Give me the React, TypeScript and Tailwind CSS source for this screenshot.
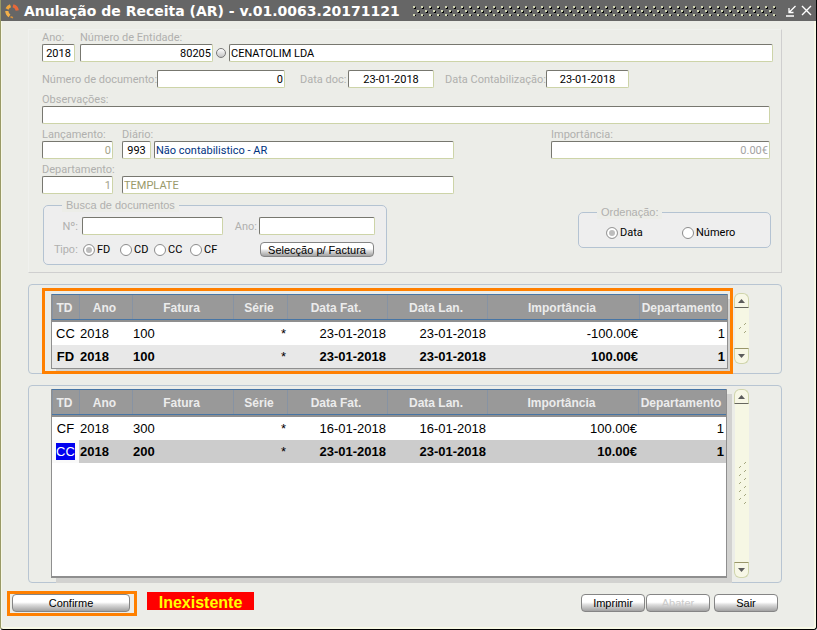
import type { ReactNode } from "react";

const inputBase =
  "h-[18px] min-w-0 rounded-[2px] border border-[#cdd4a8] border-t-[#77776f] border-l-[#77776f] bg-white px-px pt-px font-[Roboto,Arial,sans-serif] text-[11px] leading-[14px] outline-none";

type FieldProps = {
  id: string;
  label?: string;
  value?: string;
  className?: string;
};

function Field({ id, label, value = "", className = "text-black" }: FieldProps) {
  return (
    <input
      id={id}
      aria-label={label}
      defaultValue={value}
      className={`${inputBase} ${className}`}
    />
  );
}

function Caption({ htmlFor, children, className = "" }: { htmlFor: string; children: ReactNode; className?: string }) {
  return (
    <label
      htmlFor={htmlFor}
      className={`block h-[13px] whitespace-nowrap font-[Roboto,Arial,sans-serif] text-[11px] leading-[13px] text-[#b0b0ae] ${className}`}
    >
      {children}
    </label>
  );
}

function Radio({ name, text, checked = false, className = "" }: { name: string; text: string; checked?: boolean; className?: string }) {
  return (
    <label className={`flex items-center gap-[2px] font-[Roboto,Arial,sans-serif] text-[11px] leading-[13px] text-black ${className}`}>
      <input
        type="radio"
        name={name}
        defaultChecked={checked}
        className="size-3 shrink-0 appearance-none rounded-full border border-[#8c8c8c] bg-white checked:border-[#9a9a9a] checked:bg-[#bdbdbd] checked:shadow-[inset_0_0_0_2px_#fff]"
      />
      {text}
    </label>
  );
}

function PushButton({ children, className = "", disabled = false }: { children: ReactNode; className?: string; disabled?: boolean }) {
  return (
    <button
      type="button"
      disabled={disabled}
      className={`rounded-[4px] border border-[#858585] bg-linear-to-b from-white from-45% via-[#dedede] via-60% to-[#a2a2a2] text-center text-[11px] leading-[15px] whitespace-nowrap text-black disabled:text-[#cacaca] ${className}`}
    >
      {children}
    </button>
  );
}

function ScrollBar({ marks, className = "" }: { marks: number; className?: string }) {
  return (
    <div className={`flex w-[15px] shrink-0 flex-col ${className}`}>
      <button
        type="button"
        aria-label="Subir"
        className="flex h-[15px] shrink-0 items-center justify-center rounded-t-[6px] border border-[#d0d5ac] border-b-[#66665e] bg-[#f7f7e6]"
      >
        <svg width="7" height="4" viewBox="0 0 7 4"><path d="M0 4L3.5 0L7 4Z" fill="#5c5c5c" /></svg>
      </button>
      <div className="ml-px flex flex-1 items-center justify-center bg-[#f6f7e4]">
        <svg width="9" height={marks * 4} viewBox={`0 0 9 ${marks * 4}`}>
          {Array.from({ length: marks }, (_, i) => (
            <path
              key={i}
              d={i % 2 === 0 ? `M6 ${i * 4 + 3}L8 ${i * 4 + 1}` : `M1 ${i * 4 + 3}L3 ${i * 4 + 1}`}
              stroke="#a5a780"
              strokeWidth="1"
            />
          ))}
        </svg>
      </div>
      <button
        type="button"
        aria-label="Descer"
        className="flex h-[16px] shrink-0 items-center justify-center rounded-b-[6px] border border-[#d0d5ac] border-t-[#99966a] bg-[#f7f7e6]"
      >
        <svg width="7" height="4" viewBox="0 0 7 4"><path d="M0 0L3.5 4L7 0Z" fill="#5c5c5c" /></svg>
      </button>
    </div>
  );
}

type Row = { td: string; ano: string; fatura: string; fat: string; lan: string; valor: string; dep: string; selected?: boolean; bold?: boolean };

const heads = ["TD", "Ano", "Fatura", "Série", "Data Fat.", "Data Lan.", "Importância", "Departamento"];

function Grid({ rows, shade }: { rows: Row[]; shade: string }) {
  return (
    <table className="w-full table-fixed border-separate border-spacing-0">
      <colgroup>
        <col className="w-[27px]" />
        <col className="w-[53px]" />
        <col className="w-[101px]" />
        <col className="w-[54px]" />
        <col className="w-[100px]" />
        <col className="w-[100px]" />
        <col />
        <col className="w-[88px]" />
      </colgroup>
      <thead>
        <tr>
          {heads.map((h) => (
            <th
              key={h}
              className="border-b-2 border-b-[#8f8f8f] p-0 text-center text-[12px] leading-[26px] font-bold whitespace-nowrap text-[#ececec]"
            >
              <div className="h-[26px] border-y border-[#4775a5] bg-[#999999] pr-[2px] shadow-[inset_1px_0_0_#8793a3]">{h}</div>
            </th>
          ))}
        </tr>
      </thead>
      <tbody className="text-[13px] leading-[23px] whitespace-nowrap text-black">
        {rows.map((r) => (
          <tr key={r.td + r.fatura} className={`h-[23px] ${r.bold ? `font-bold ${shade}` : "bg-white"}`}>
            <td className={`p-0 text-center ${r.selected ? "bg-[#f9f9f9] font-normal" : ""}`}>
              <span className={r.selected ? "inline-block h-[17px] bg-[#0000f0] leading-[17px] text-white" : ""}>{r.td}</span>
            </td>
            <td className="p-0 pl-px">{r.ano}</td>
            <td className="p-0 pl-px">{r.fatura}</td>
            <td className="p-0 pr-px text-right font-normal">*</td>
            <td className="p-0 pr-px text-right">{r.fat}</td>
            <td className="p-0 pr-px text-right">{r.lan}</td>
            <td className="p-0 pr-px text-right">{r.valor}</td>
            <td className="p-0 pr-[2px] text-right">{r.dep}</td>
          </tr>
        ))}
      </tbody>
    </table>
  );
}

const topRows: Row[] = [
  { td: "CC", ano: "2018", fatura: "100", fat: "23-01-2018", lan: "23-01-2018", valor: "-100.00€", dep: "1" },
  { td: "FD", ano: "2018", fatura: "100", fat: "23-01-2018", lan: "23-01-2018", valor: "100.00€", dep: "1", bold: true },
];

const bottomRows: Row[] = [
  { td: "CF", ano: "2018", fatura: "300", fat: "16-01-2018", lan: "16-01-2018", valor: "100.00€", dep: "1" },
  { td: "CC", ano: "2018", fatura: "200", fat: "23-01-2018", lan: "23-01-2018", valor: "10.00€", dep: "1", bold: true, selected: true },
];

function TitleBar() {
  return (
    <header className="flex h-[21px] items-center bg-[#666666] pr-[4px] pl-[3px]">
      <svg width="16" height="16" viewBox="0 0 16 16" fill="none" strokeWidth="3.200" className="mr-[4px] shrink-0">
        <path d="M6.500 2.800A6 6 0 0 0 3 6" stroke="#f0a63c" />
        <path d="M2.800 8A6 6 0 0 0 5.500 12.800" stroke="#f3b04a" />
        <path d="M9 2.800A6 6 0 0 1 13.300 7.500" stroke="#e8683a" />
        <path d="M6.500 13.800L9 14.800" stroke="#d9943c" strokeWidth="1.500" />
      </svg>
      <h1 className="text-[14px] leading-[20px] font-bold whitespace-nowrap text-white [font-family:Verdana,'DejaVu_Sans',sans-serif]">
        Anulação de Receita (AR) - v.01.0063.20171121
      </h1>
      <svg className="mr-[9px] ml-[13px] h-[10px] min-w-0 flex-1" aria-hidden="true">
        <defs>
          <pattern id="grip" width="8" height="8" patternUnits="userSpaceOnUse">
            <path d="M1 1h2v2h-2zM5 5h2v2h-2z" fill="#000" />
            <path d="M0 0h2v2h-2zM4 4h2v2h-2z" fill="#d3d8b4" />
          </pattern>
        </defs>
        <rect width="100%" height="11" fill="url(#grip)" />
      </svg>
      <button type="button" aria-label="Minimizar" className="mr-[4px]">
        <svg width="12" height="12" viewBox="0 0 12 12" fill="none" stroke="#fff" strokeWidth="1.300">
          <path d="M10.500 1L4.500 7M4 3v4.500h4.500M1 11h8" />
        </svg>
      </button>
      <button type="button" aria-label="Fechar">
        <svg width="11" height="11" viewBox="0 0 11 11" fill="none" stroke="#fff" strokeWidth="1.400">
          <path d="M1 1l9 9M10 1l-9 9" />
        </svg>
      </button>
    </header>
  );
}

export default function App() {
  return (
    <div className="flex min-h-screen flex-col rounded-b-[3px] border-r border-b border-l border-black border-l-[#999966] bg-[#ecede8] font-['Liberation_Sans',Arial,sans-serif] shadow-[inset_-2px_-2px_0_#f7f8e6,inset_1px_0_0_#f7f8e6]">
      <TitleBar />
      <main className="flex flex-1 flex-col pt-2 pr-[34px] pl-[27px]">
        <form className="flex flex-col border border-[#f0f1ee] border-r-[#cfcfcf] border-b-[#cfcfcf] pt-px pr-2 pb-[7px] pl-[13px]">
          <div className="flex items-end">
            <div className="mr-[5px] flex w-[33px] flex-col">
              <Caption htmlFor="ano">Ano:</Caption>
              <Field id="ano" value="2018" className="text-center text-black" />
            </div>
            <div className="flex w-[133px] flex-col">
              <Caption htmlFor="entidade">Número de Entidade:</Caption>
              <Field id="entidade" value="80205" className="text-right text-black" />
            </div>
            <button
              type="button"
              aria-label="Procurar entidade"
              className="mx-[3px] mb-[4px] size-[10px] self-end rounded-full border border-[#777] bg-linear-to-b from-white to-[#c4c4c4]"
            />
            <Field id="nome" label="Nome da entidade" value="CENATOLIM LDA" className="flex-1 text-black" />
          </div>

          <div className="mt-2 flex items-center">
            <Caption htmlFor="documento" className="w-[115px]">Número de documento:</Caption>
            <Field id="documento" value="0" className="w-[128px] text-right text-black" />
            <Caption htmlFor="datadoc" className="ml-[15px] w-[48px]">Data doc:</Caption>
            <Field id="datadoc" value="23-01-2018" className="w-[86px] text-center text-black" />
            <Caption htmlFor="datacont" className="ml-[11px] w-[101px]">Data Contabilização:</Caption>
            <Field id="datacont" value="23-01-2018" className="w-[83px] text-center text-black" />
          </div>

          <div className="mt-[5px] mr-[3px] flex flex-col">
            <Caption htmlFor="obs">Observações:</Caption>
            <Field id="obs" />
          </div>

          <div className="mt-1 mr-[3px] flex items-end">
            <div className="mr-[9px] flex w-[71px] flex-col">
              <Caption htmlFor="lancamento">Lançamento:</Caption>
              <Field id="lancamento" value="0" className="text-right text-[#a3a38a]" />
            </div>
            <div className="mr-[3px] flex w-[29px] flex-col">
              <Caption htmlFor="diario">Diário:</Caption>
              <Field id="diario" value="993" className="text-center text-black" />
            </div>
            <Field id="diarionome" label="Nome do diário" value="Não contabilistico - AR" className="w-[300px] text-[#00337f]" />
            <div className="ml-auto flex w-[219px] flex-col">
              <Caption htmlFor="importancia">Importância:</Caption>
              <Field id="importancia" value="0.00€" className="text-right text-[#a3a3a3]" />
            </div>
          </div>

          <div className="mt-1 flex items-end gap-[9px]">
            <div className="flex w-[71px] flex-col">
              <Caption htmlFor="departamento">Departamento:</Caption>
              <Field id="departamento" value="1" className="text-right text-[#a3a38a]" />
            </div>
            <Field id="depnome" label="Nome do departamento" value="TEMPLATE" className="w-[332px] text-[#99996a]" />
          </div>

          <div className="mt-[5px] mr-[2px] ml-px flex items-start justify-between">
            <fieldset className="w-[344px] rounded-[5px] border border-[#b4c3d2] bg-[#eeeeee] pt-[5px] pb-[7px] pl-[10px]">
              <legend className="ml-[8px] h-[13px] bg-[#ecede8] px-[4px] text-[11px] leading-[13px] text-[#b0b0ae]">Busca de documentos</legend>
              <div className="flex items-center">
                <Caption htmlFor="numero" className="w-[28px] pr-[4px] text-right">Nº:</Caption>
                <Field id="numero" className="w-[141px]" />
                <Caption htmlFor="anobusca" className="w-[36px] pr-[2px] text-right">Ano:</Caption>
                <Field id="anobusca" className="w-[116px]" />
              </div>
              <div className="mt-[7px] flex h-[15px] items-center">
                <span className="w-[29px] text-[11px] text-[#b0b0ae]">Tipo:</span>
                <Radio name="tipo" text="FD" checked className="w-[37px]" />
                <Radio name="tipo" text="CD" className="w-[34px]" />
                <Radio name="tipo" text="CC" className="w-[36px]" />
                <Radio name="tipo" text="CF" className="w-[70px]" />
                <PushButton className="h-[15px] w-[114px]">Selecção p/ Factura</PushButton>
              </div>
            </fieldset>
            <fieldset className="mt-[7px] w-[193px] rounded-[5px] border border-[#b4c3d2] bg-[#eeeeee] pt-[7px] pb-[8px] pl-[27px]">
              <legend className="-ml-[9px] h-[13px] bg-[#ecede8] px-[4px] text-[11px] leading-[13px] text-[#b0b0ae]">Ordenação:</legend>
              <div className="flex items-center">
                <Radio name="ordem" text="Data" checked className="w-[76px]" />
                <Radio name="ordem" text="Número" />
              </div>
            </fieldset>
          </div>
        </form>

        <section className="mt-[11px] flex rounded-[4px] border border-[#b8c5d2] pt-[3px] pr-[32px] pl-[13px]">
          <div className="-mb-px h-[86px] flex-1 overflow-hidden border-3 border-[#ff8000] pt-[3px] pr-[2px] pl-[6px]">
            <div className="border-x border-b border-[#8f8f8f] bg-white shadow-[5px_5px_0_#d2d2d0]">
              <Grid rows={topRows} shade="bg-[#e8e8e8]" />
            </div>
          </div>
          <ScrollBar marks={3} className="mt-[5px] mb-[9px] ml-[1px]" />
        </section>

        <section className="mt-[11px] flex flex-1 rounded-[4px] border border-[#b8c5d2] pt-[3px] pr-[32px] pb-[4px] pl-[22px]">
          <div className="mr-[7px] min-h-[120px] flex-1 border-x border-b-2 border-[#8f8f8f] bg-white shadow-[5px_5px_0_#d2d2d0]">
            <Grid rows={bottomRows} shade="bg-[#cccccc]" />
          </div>
          <ScrollBar marks={11} />
        </section>
      </main>

      <footer className="mt-2 mb-[13px] flex items-start pr-[38px] pl-[6px]">
        <div className="flex h-[25px] w-[130px] border-3 border-[#ff8000] pl-[2px]">
          <PushButton className="h-[18px] w-[118px]">Confirme</PushButton>
        </div>
        <output className="mt-px ml-[10px] h-[18px] w-[107px] bg-[#ff0000] pt-px text-center text-[16px] leading-[20px] font-bold text-[#ffff00]">
          Inexistente
        </output>
        <div className="mt-[3px] ml-auto flex">
          <PushButton className="mr-px h-[18px] w-[64px]">Imprimir</PushButton>
          <PushButton disabled className="mr-[4px] h-[18px] w-[64px]">Abater</PushButton>
          <PushButton className="h-[18px] w-[64px]">Sair</PushButton>
        </div>
      </footer>
    </div>
  );
}
